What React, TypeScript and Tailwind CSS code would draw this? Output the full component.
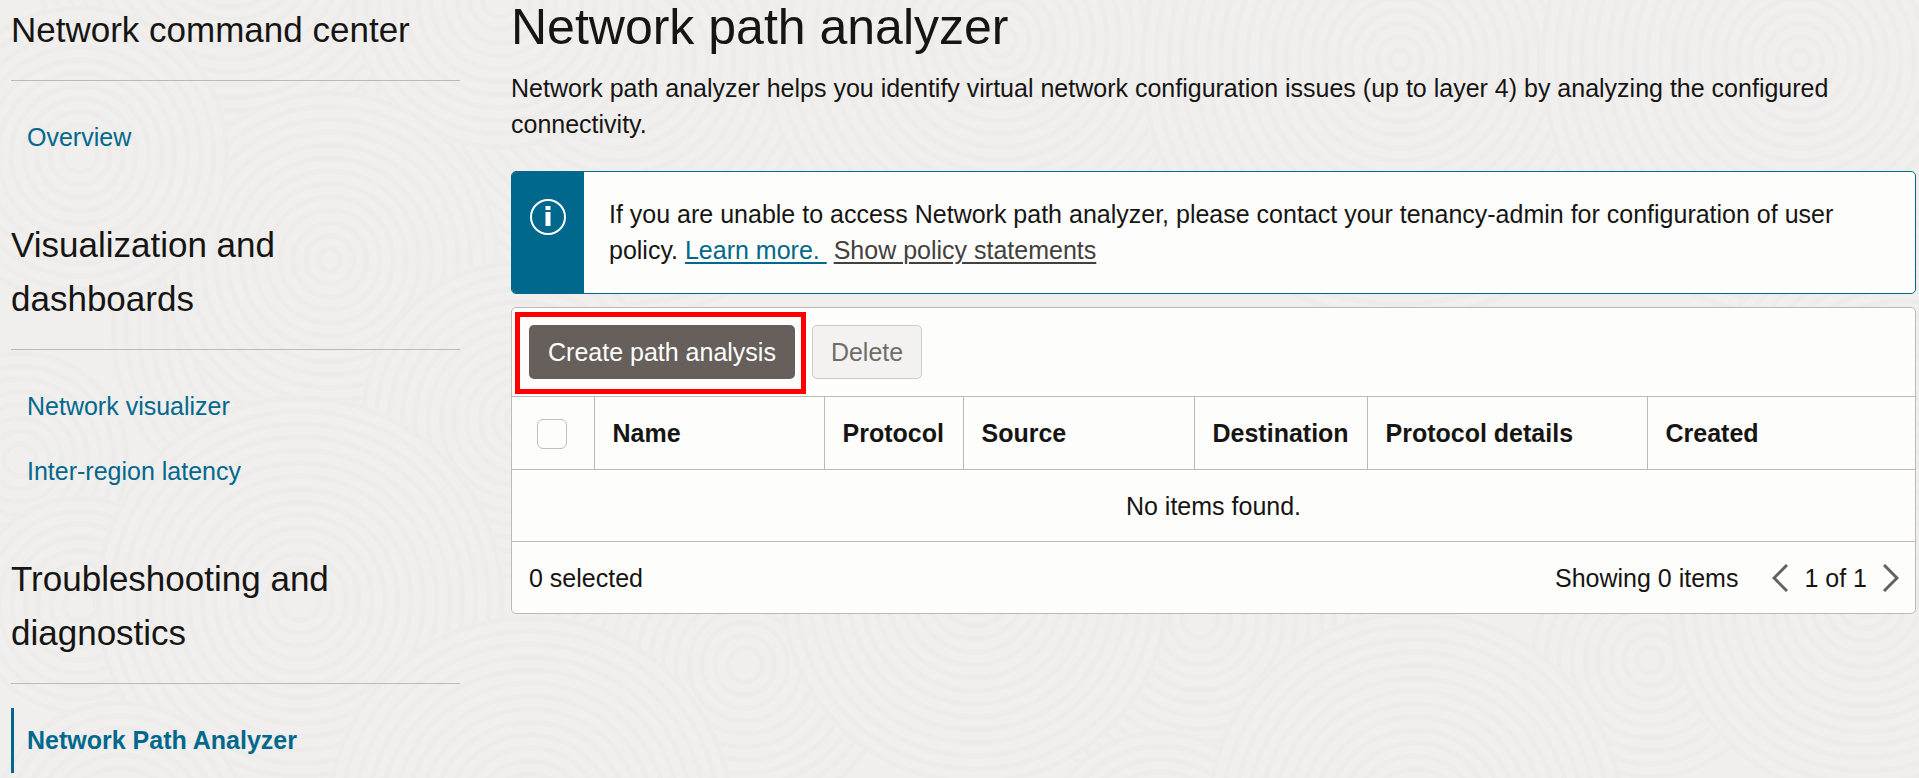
import { ReactNode } from "react"

interface NavLink {
    name: string
    active?: boolean
}

interface NavGroup {
    title: string
    links: NavLink[]
}

const groups: NavGroup[] = [
    { title: "Network command center", links: [{ name: "Overview" }] },
    {
        title: "Visualization and dashboards",
        links: [{ name: "Network visualizer" }, { name: "Inter-region latency" }],
    },
    {
        title: "Troubleshooting and diagnostics",
        links: [{ name: "Network Path Analyzer", active: true }],
    },
]

const columns = [
    { name: "Name", width: "w-[230px]" },
    { name: "Protocol", width: "w-[139px]" },
    { name: "Source", width: "w-[231px]" },
    { name: "Destination", width: "w-[173px]" },
    { name: "Protocol details", width: "w-[280px]" },
    { name: "Created", width: "" },
]

// cx, cy, radius. Later discs cover the earlier ones.
const discs = [
    [620, 60, 260],
    [1000, 40, 240],
    [1400, 60, 260],
    [1800, 60, 260],
    [230, -60, 200],
    [500, 0, 150],
    [300, 330, 190],
    [1900, 420, 200],
    [330, 260, 170],
    [80, 155, 150],
    [20, 460, 110],
    [520, 420, 160],
    [1200, 620, 190],
    [1650, 660, 120],
    [640, 680, 120],
    [745, 665, 150],
    [80, 605, 110],
    [300, 600, 205],
    [975, 590, 195],
    [1865, 600, 200],
    [120, 830, 130],
    [1160, 850, 120],
    [530, 820, 205],
    [1415, 820, 210],
]

function Ripples() {
    return <svg
        className="absolute inset-0 -z-10 h-full w-full"
        viewBox="0 0 1919 778"
        preserveAspectRatio="xMidYMid slice"
        aria-hidden="true"
    >
        {discs.map(([cx, cy, r]) => <g key={`${cx}-${cy}`}>
            <circle cx={cx} cy={cy} r={r} fill="#f0efed" />
            {Array.from({ length: Math.floor(r / 13) }, (_, i) => <circle
                key={i}
                cx={cx}
                cy={cy}
                r={r - i * 13 - 3}
                fill="none"
                stroke="#edecea"
                strokeWidth="5"
            />)}
        </g>)}
    </svg>
}

function InfoIcon() {
    return <svg width="36" height="36" viewBox="0 0 36 36" fill="none" aria-hidden="true">
        <circle cx="18" cy="18" r="17" stroke="#fff" strokeWidth="2" />
        <path d="M15.5 7h5v4h-5zM15.5 13h5v14h-5z" fill="#fff" />
    </svg>
}

function PageButton({ label, children }: { label: string, children: ReactNode }) {
    return <button aria-label={label} className="flex h-9 w-4 items-center justify-center">
        <svg width="16" height="28" viewBox="0 0 16 28" fill="none" stroke="#665f5b" strokeWidth="3" aria-hidden="true">
            {children}
        </svg>
    </button>
}

function SideNav() {
    return <nav className="flex w-[449px] flex-none flex-col gap-12 pt-[3px]">
        {groups.map((g) => <section key={g.title}>
            <h2 className="border-b border-[#bfb9b4] pb-[23px] text-[35px] leading-[54px]">{g.title}</h2>
            <ul className="mt-6">
                {g.links.map((l) => <li key={l.name}>
                    <a
                        href="#"
                        className={l.active
                            ? "block border-l-[3px] border-[#00688c] pt-[14px] pb-[15px] pl-[13px] font-bold text-[#00688c]"
                            : "block border-l-[3px] border-transparent pt-[14px] pb-[15px] pl-[13px] text-[#00688c]"}
                    >
                        {l.name}
                    </a>
                </li>)}
            </ul>
        </section>)}
    </nav>
}

export default function App() {
    return <div className="relative isolate flex min-h-screen gap-[51px] overflow-hidden bg-[#f0efed] pr-[3px] pl-[11px] font-['Liberation_Sans',Arial,sans-serif] text-[25px] leading-9 text-[#161513]">
        <Ripples />
        <SideNav />
        <main className="min-w-0 flex-1">
            <h1 className="text-[50px] leading-[54px]">Network path analyzer</h1>
            <p className="mt-4">
                Network path analyzer helps you identify virtual network configuration issues (up to layer 4) by analyzing the configured connectivity.
            </p>

            <div className="mt-[29px] flex overflow-hidden rounded-[5px] border border-[#00688c] bg-[#fdfdfb]">
                <div className="flex w-[72px] flex-none justify-center bg-[#00688c] pt-[27px]">
                    <InfoIcon />
                </div>
                <p className="px-[25px] pt-6 pb-[25px]">
                    If you are unable to access Network path analyzer, please contact your tenancy-admin for configuration of user policy.{" "}
                    <a href="#" className="text-[#00688c] underline decoration-2 underline-offset-3">Learn more.&nbsp;</a>{" "}
                    <a href="#" className="text-[#43403d] underline decoration-2 underline-offset-3">Show policy statements</a>
                </p>
            </div>

            <div className="mt-[13px] rounded-[5px] border border-[#bfb9b4] bg-[#fdfdfb]">
                <div className="flex gap-[17px] p-[17px]">
                    <div className="relative">
                        <button className="h-[54px] rounded-[5px] bg-[#665f5b] px-[19px] text-white">Create path analysis</button>
                        <div className="pointer-events-none absolute -top-[13px] -right-[11px] -bottom-[15px] -left-[14px] border-5 border-[#ff0000]" />
                    </div>
                    <button disabled className="h-[54px] rounded-[5px] border border-[#ceccc9] bg-[#f4f2f1] px-[18px] text-[#716c68]">Delete</button>
                </div>

                <table className="w-full table-fixed border-collapse text-left">
                    <thead>
                        <tr className="h-[73px] border-y border-[#bfb9b4]">
                            <th className="w-[82px] border-r border-[#bfb9b4]">
                                <input
                                    type="checkbox"
                                    aria-label="Select all"
                                    className="mt-[2px] ml-[25px] block size-[30px] appearance-none rounded-[6px] border border-[#c3beba] bg-[#fdfdfb]"
                                />
                            </th>
                            {columns.map((c) => <th
                                key={c.name}
                                className={`${c.width} border-r border-[#bfb9b4] pl-[18px] font-bold whitespace-nowrap last:border-r-0`}
                            >
                                {c.name}
                            </th>)}
                        </tr>
                    </thead>
                    <tbody>
                        <tr className="h-[72px] border-b border-[#bfb9b4]">
                            <td colSpan={7} className="text-center">No items found.</td>
                        </tr>
                    </tbody>
                </table>

                <div className="flex items-center justify-between pt-[18px] pr-4 pb-[17px] pl-[17px]">
                    <span>0 selected</span>
                    <div className="flex items-center">
                        <span className="mr-[34px]">Showing 0 items</span>
                        <PageButton label="Previous page"><path d="M15 1 2 14l13 13" /></PageButton>
                        <span className="mx-4">1 of 1</span>
                        <PageButton label="Next page"><path d="m1 1 13 13L1 27" /></PageButton>
                    </div>
                </div>
            </div>
        </main>
    </div>
}
